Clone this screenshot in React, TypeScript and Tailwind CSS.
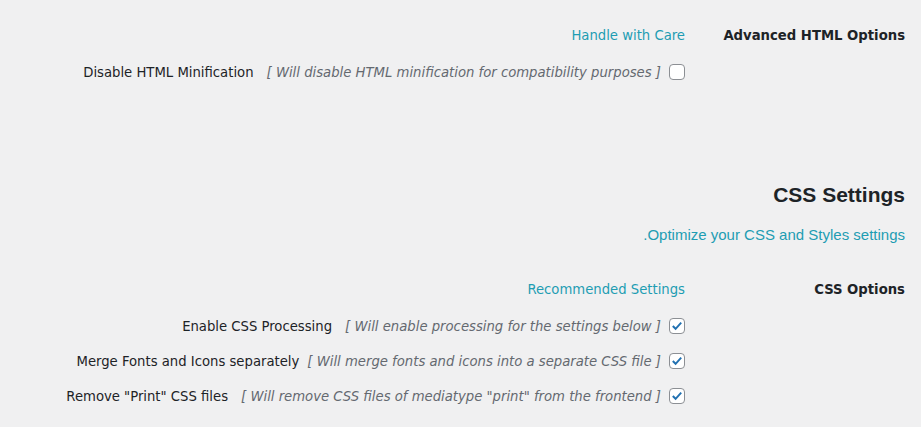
import React from "react";

const teal = "text-[#1e9db3]";

const Box = ({ checked }: { checked?: boolean }) => (
  <span className="inline-flex h-4 w-4 shrink-0 items-center justify-center rounded-[4px] border border-[#8c8f94] bg-white">
    {checked && (
      <svg viewBox="0 0 16 16" className="h-[14px] w-[14px]">
        <path d="M3.2 8 6.4 11.2 12.8 4.2" fill="none" stroke="#2271b1" strokeWidth="2.2" />
      </svg>
    )}
  </span>
);

const Option = ({ label, note, checked, gap = "mr-[13px]" }: { label: string; note: string; checked?: boolean; gap?: string }) => (
  <div className="flex h-[35px] items-center">
    <span className={`${gap} text-[#1d2327]`}>{label}</span>
    <span className="mr-[8px] italic text-[#646970]">[ {note} ]</span>
    <Box checked={checked} />
  </div>
);

const Row = ({ title, children }: { title?: string; children: React.ReactNode }) => (
  <div className="flex">
    <div className="w-[220px] shrink-0 pl-2.5 font-bold text-[#1d2327]">{title}</div>
    <div className="flex-1">{children}</div>
  </div>
);

const App = () => {
  return (
    <div
      dir="rtl"
      className="h-[427px] w-[921px] overflow-hidden bg-[#f0f0f1] pr-4 text-[14.7px] leading-[22px] text-[#1d2327]"
      style={{ fontFamily: '"DejaVu Sans Condensed", "DejaVu Sans", sans-serif' }}
    >
      {/* Advanced HTML */}
      <div className="pt-[24px]">
        <Row title="Advanced HTML Options">
          <div className={`h-[30px] ${teal}`}>Handle with Care</div>
        </Row>
        <Row>
          <div dir="ltr" className="flex justify-end">
            <Option label="Disable HTML Minification" note="Will disable HTML minification for compatibility purposes" />
          </div>
        </Row>
      </div>

      {/* CSS Settings */}
      <div className="pt-[92px]" style={{ fontFamily: '"Liberation Sans", Arial, sans-serif' }}>
        <h2 className="text-[21px] font-bold leading-[28px]">CSS Settings</h2>
        <p className={`mt-[15px] text-[15px] leading-[21px] ${teal}`}>Optimize your CSS and Styles settings.</p>
      </div>

      <div className="pt-[33px]">
        <Row title="CSS Options">
          <div className={`h-[30px] ${teal}`}>Recommended Settings</div>
        </Row>
        <Row>
          <div dir="ltr" className="flex flex-col items-end">
            <Option checked label="Enable CSS Processing" note="Will enable processing for the settings below" />
            <Option checked gap="mr-[8px]" label="Merge Fonts and Icons separately" note="Will merge fonts and icons into a separate CSS file" />
            <Option checked label={'Remove "Print" CSS files'} note={'Will remove CSS files of mediatype "print" from the frontend'} />
          </div>
        </Row>
      </div>
    </div>
  );
};

export default App;
